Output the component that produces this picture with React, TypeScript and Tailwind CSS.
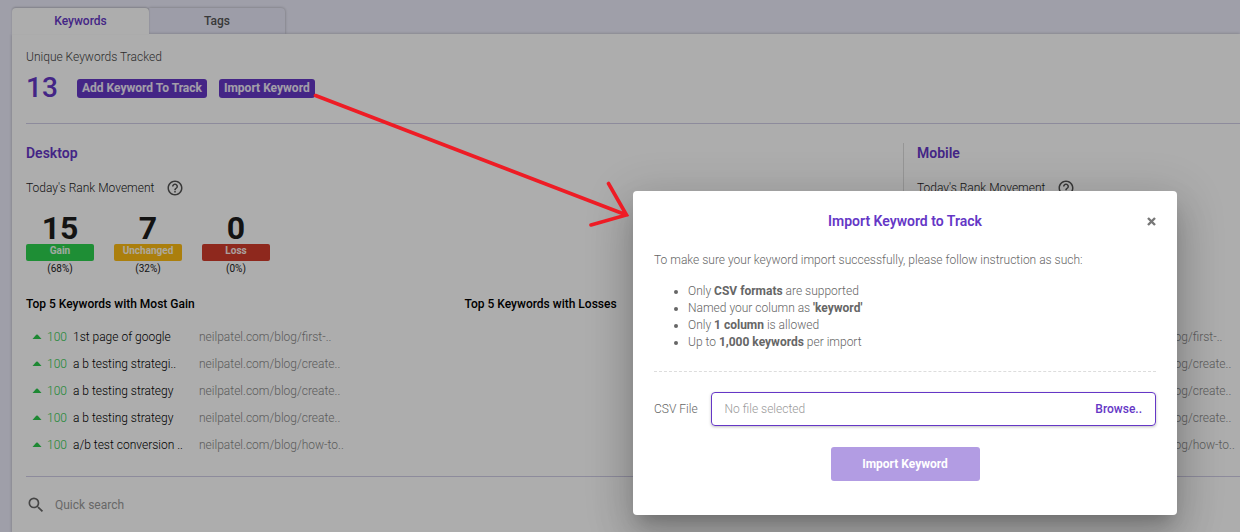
import { MdHelpOutline, MdSearch } from "react-icons/md";

type Ranking = { change: number; keyword: string; url: string };

const rankings: Ranking[] = [
  { change: 100, keyword: "1st page of google", url: "neilpatel.com/blog/first-.." },
  { change: 100, keyword: "a b testing strategi..", url: "neilpatel.com/blog/create.." },
  { change: 100, keyword: "a b testing strategy", url: "neilpatel.com/blog/create.." },
  { change: 100, keyword: "a b testing strategy", url: "neilpatel.com/blog/create.." },
  { change: 100, keyword: "a/b test conversion ..", url: "neilpatel.com/blog/how-to.." },
];

const movements = [
  { label: "Gain", value: 15, share: "(68%)", color: "bg-[#2dd24f]" },
  { label: "Unchanged", value: 7, share: "(32%)", color: "bg-[#fcbb14]" },
  { label: "Loss", value: 0, share: "(0%)", color: "bg-[#d13b2b]" },
];

function Movements() {
  return (
    <div className="mt-[15px] flex gap-5">
      {movements.map((m) => (
        <div key={m.label} className="w-[68px] text-center">
          <div className="text-[32px] leading-8 font-bold text-[#1c1c1c]">{m.value}</div>
          <div className={`h-[17px] rounded-xs text-[10px] leading-[14px] font-bold text-white/90 ${m.color}`}>{m.label}</div>
          <div className="text-[10px] leading-4 text-[#222]">{m.share}</div>
        </div>
      ))}
    </div>
  );
}

function RankingTable() {
  return (
    <table className="mt-[9px] ml-1.5 text-xs font-light whitespace-nowrap">
      <tbody>
        {rankings.map((r, i) => (
          <tr key={i} className="h-[27px]">
            <td className="w-[15px]">
              <svg width="10" height="5" viewBox="0 0 10 5" aria-hidden="true">
                <path d="M0.5 5 L4.2 0.8 Q5 0.2 5.8 0.8 L9.5 5 Z" fill="#2cc94c" />
              </svg>
            </td>
            <td className="w-[26px] text-[#2cc94c]">{r.change}</td>
            <td className="w-[126px] text-black">{r.keyword}</td>
            <td className="text-[#888]">{r.url}</td>
          </tr>
        ))}
      </tbody>
    </table>
  );
}

function Device({ name, losses = false }: { name: string; losses?: boolean }) {
  return (
    <section className="min-w-0">
      <h2 className="text-sm leading-5 font-semibold text-[#6537c6]">{name}</h2>
      <div className="mt-4 flex items-center gap-3 text-xs leading-[18px] font-light whitespace-nowrap text-[#222]">
        Today's Rank Movement
        <MdHelpOutline size={18} className="text-[#555]" />
      </div>
      <Movements />
      <div className="mt-[17px] flex">
        <div className="flex-1">
          <h3 className="text-xs leading-5 font-medium whitespace-nowrap text-black">Top 5 Keywords with Most Gain</h3>
          <RankingTable />
        </div>
        {losses && (
          <div className="flex-1">
            <h3 className="text-xs leading-5 font-medium whitespace-nowrap text-black">Top 5 Keywords with Losses</h3>
          </div>
        )}
      </div>
    </section>
  );
}

function ImportDialog() {
  return (
    <div role="dialog" aria-labelledby="import-title" className="w-[544px] rounded bg-white px-[21px] pt-5 pb-[34px] text-xs font-light text-[#666] shadow-[0_11px_15px_-7px_rgba(0,0,0,0.2),0_24px_38px_3px_rgba(0,0,0,0.14),0_9px_46px_8px_rgba(0,0,0,0.12)]">
      <div className="grid grid-cols-[20px_1fr_20px] items-center">
        <h2 id="import-title" className="col-start-2 text-center text-sm leading-5 font-semibold text-[#6537c6]">
          Import Keyword to Track
        </h2>
        <button type="button" aria-label="Close" className="flex justify-end">
          <svg width="9" height="9" viewBox="0 0 9 9" stroke="#777" strokeWidth="2.4" aria-hidden="true">
            <path d="M1 1 L8 8 M8 1 L1 8" />
          </svg>
        </button>
      </div>
      <p className="mt-5 leading-[18px]">To make sure your keyword import successfully, please follow instruction as such:</p>
      <ul className="mt-3.5 list-disc pl-[34px] leading-[17px] [&_b]:font-bold">
        <li>Only <b>CSV formats</b> are supported</li>
        <li>Named your column as <b>'keyword'</b></li>
        <li>Only <b>1 column</b> is allowed</li>
        <li>Up to <b>1,000 keywords</b> per import</li>
      </ul>
      <hr className="mt-5 border-dashed border-[#ddd]" />
      <div className="mt-5 flex items-center gap-[13px]">
        <label htmlFor="csv-file">CSV File</label>
        <div className="flex h-[34px] flex-1 items-center rounded border border-[#6537c6] px-[13px] shadow-[0_1px_3px_rgba(0,0,0,0.25)]">
          <input id="csv-file" type="text" readOnly placeholder="No file selected" className="min-w-0 flex-1 outline-none placeholder:text-[#999]" />
          <button type="button" className="font-medium text-[#6537c6]">Browse..</button>
        </div>
      </div>
      <div className="mt-[21px] flex justify-center">
        <button type="button" className="h-[34px] w-[149px] rounded-[3px] bg-[#b29ce3] font-bold text-white">Import Keyword</button>
      </div>
    </div>
  );
}

export default function App() {
  return (
    <div className="relative flex min-h-screen flex-col overflow-hidden bg-[#ebebf9] pt-2 pl-3 font-[Roboto,sans-serif]">
      <nav className="flex text-xs leading-[26px] font-medium">
        <button type="button" className="z-10 w-[137px] rounded-t bg-white text-[#6537c6] shadow-[0_-1px_2px_rgba(0,0,0,0.2)]">Keywords</button>
        <button type="button" className="w-[136px] rounded-tr bg-[#e8e8f8] text-[#555] shadow-[0_0_3px_rgba(0,0,0,0.3)]">Tags</button>
      </nav>
      <main className="flex-1 bg-white pl-3.5 shadow-[0_0_3px_rgba(0,0,0,0.25)]">
        <div className="pt-3.5 text-xs leading-[18px] font-light text-[#444]">Unique Keywords Tracked</div>
        <div className="mt-2 flex items-center pb-[21px]">
          <span className="w-[51px] text-[28px] leading-7 font-medium text-[#6537c6]">13</span>
          <div className="flex gap-3 text-xs leading-[19px] font-bold text-white/90">
            <button type="button" className="rounded-[3px] bg-[#6537c6] px-[5px]">Add Keyword To Track</button>
            <button type="button" className="rounded-[3px] bg-[#6537c6] px-[5px]">Import Keyword</button>
          </div>
        </div>
        <div className="grid grid-cols-[minmax(0,877fr)_minmax(0,337fr)] border-y border-[#d0cde6] pt-[19px] pb-[18px]">
          <Device name="Desktop" losses />
          <div className="border-l border-[#ddd] pl-[13px]">
            <Device name="Mobile" />
          </div>
        </div>
        <div className="flex items-center gap-[9px] py-[18px]">
          <MdSearch size={20} className="text-[#666]" />
          <input aria-label="Quick search" placeholder="Quick search" className="w-60 text-xs outline-none placeholder:text-[#999]" />
        </div>
      </main>

      <div className="absolute inset-0 z-20 flex items-start justify-end bg-black/32 pt-[191px] pr-[63px]">
        <ImportDialog />
      </div>

      <svg className="pointer-events-none absolute top-0 left-0 z-30" width="640" height="240" viewBox="0 0 640 240" fill="none" stroke="#ee1c25" strokeWidth="3.6" strokeLinecap="round" aria-hidden="true">
        <path d="M315.5 95.5 L626.5 215 M608.5 183.5 L626.5 215 L591 225" />
      </svg>
    </div>
  );
}
